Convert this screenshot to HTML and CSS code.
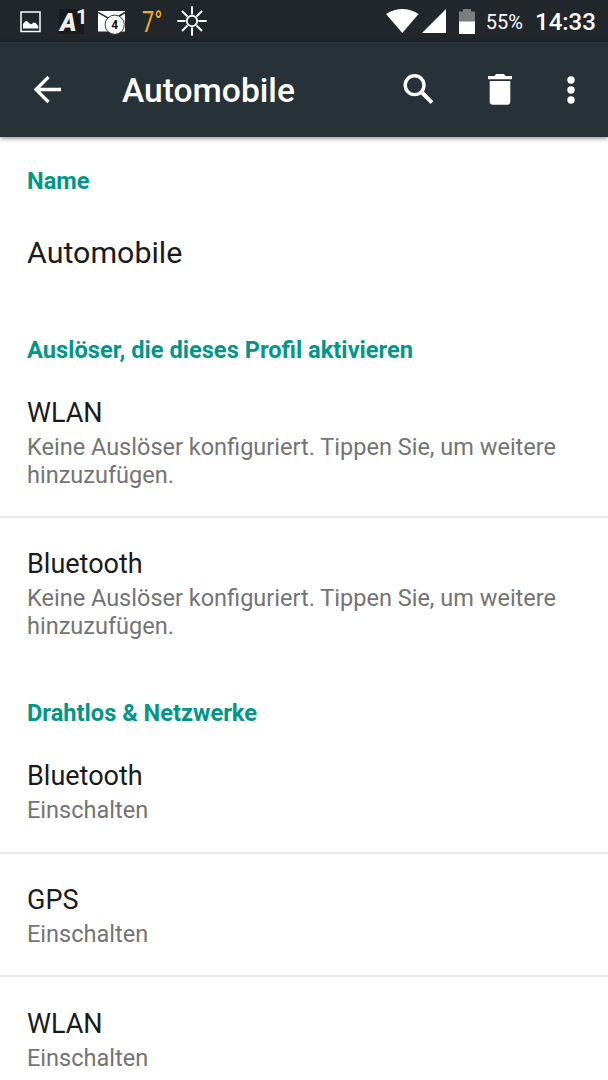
FILE: index.html
```html
<!DOCTYPE html>
<html lang="de">
<head>
    <meta charset="UTF-8">
    <meta name="viewport" content="width=device-width, initial-scale=1.0">
    <title>Automobile</title>
    <link rel="stylesheet" href="styles.css">
</head>
<body>
    <div class="status-bar">
        <div class="notifications">
            <svg class="icon-picture" width="22" height="22" viewBox="0 0 22 22">
                <rect x="1" y="1" width="19" height="19.5" fill="none" stroke="#fff" stroke-width="1.5"/>
                <path d="M3 17.5V13L5 10.5L7 10L9.5 12.5L11.5 13.3L13.5 11.5L15.5 12L18.3 15V17.5Z" fill="#fff"/>
            </svg>
            <span class="icon-a1"><b>A</b><i>1</i></span>
            <svg class="icon-mail" width="28" height="25" viewBox="0 0 28 25">
                <rect width="27" height="20.5" fill="#fff"/>
                <path d="M0 1.5L10 6.8M27 1.5L20.5 5.5" fill="none" stroke="#21272b" stroke-width="1.5"/>
                <circle cx="16.7" cy="13.7" r="9.6" fill="#fff" stroke="#21272b" stroke-width="0.9"/>
                <text x="16.7" y="18" text-anchor="middle">4</text>
            </svg>
            <span class="temperature">7°</span>
            <svg class="icon-sun" width="30" height="30" viewBox="0 0 30 30" fill="none" stroke="#fff" stroke-width="1.9">
                <circle cx="15" cy="15" r="5.2"/>
                <path d="M15 .3V8.5M15 21.5V29.7M.3 15H8.5M21.5 15H29.7M5 5L10.5 10.5M19.5 19.5L25 25M25 5L19.5 10.5M10.5 19.5L5 25"/>
            </svg>
        </div>
        <div class="system">
            <svg class="icon-wifi" width="33" height="24" viewBox="0 0 33 24">
                <path d="M0 5Q16.3-5 32.6 5L16.3 24Z" fill="#fff"/>
            </svg>
            <svg class="icon-signal" width="24" height="24" viewBox="0 0 24 24">
                <path d="M0 24L24 0V24Z" fill="#fff"/>
            </svg>
            <svg class="icon-battery" width="16" height="25" viewBox="0 0 16 25">
                <path d="M0 2.5H4V0H12V2.5H16V13H0Z" fill="#7b7d7f"/>
                <path d="M0 12.5H16V25H0Z" fill="#fff"/>
            </svg>
            <span class="percent">55%</span>
            <span class="clock">14:33</span>
        </div>
    </div>

    <header>
        <svg class="back" width="28" height="28" viewBox="0 0 28 28" fill="none" stroke="#fff" stroke-width="3.3">
            <path d="M28 13.5H3.5M15.5 1L3 13.5L15.5 26"/>
        </svg>
        <h1>Automobile</h1>
        <svg class="search" width="31" height="31" viewBox="0 0 31 31" fill="none" stroke="#fff">
            <circle cx="11.6" cy="11.2" r="9.4" stroke-width="3.4"/>
            <path d="M18.9 18.5L29 28.6" stroke-width="4"/>
        </svg>
        <svg class="trash" width="24" height="31" viewBox="0 0 24 31" fill="#fff">
            <path d="M0 2H6.5L8 0H16L17.5 2H24V5.2H0Z"/>
            <path d="M1.7 7H22.3V27.5Q22.3 30.8 19 30.8H5Q1.7 30.8 1.7 27.5Z"/>
        </svg>
        <svg class="more" width="8" height="28" viewBox="0 0 8 28" fill="#fff">
            <circle cx="4" cy="4" r="3.7"/>
            <circle cx="4" cy="14" r="3.7"/>
            <circle cx="4" cy="24" r="3.7"/>
        </svg>
    </header>

    <main>
        <section>
            <h2>Name</h2>
            <p class="profile-name">Automobile</p>
        </section>

        <section>
            <h2>Auslöser, die dieses Profil aktivieren</h2>
            <div class="item">
                <h3>WLAN</h3>
                <p>Keine Auslöser konfiguriert. Tippen Sie, um weitere hinzuzufügen.</p>
            </div>
            <div class="item">
                <h3>Bluetooth</h3>
                <p>Keine Auslöser konfiguriert. Tippen Sie, um weitere hinzuzufügen.</p>
            </div>
        </section>

        <section>
            <h2>Drahtlos &amp; Netzwerke</h2>
            <div class="item">
                <h3>Bluetooth</h3>
                <p>Einschalten</p>
            </div>
            <div class="item">
                <h3>GPS</h3>
                <p>Einschalten</p>
            </div>
            <div class="item">
                <h3>WLAN</h3>
                <p>Einschalten</p>
            </div>
        </section>
    </main>
</body>
</html>
```
FILE: styles.css
```css
* {
    box-sizing: border-box;
}
body {
    font-family: Roboto, sans-serif;
    margin: 0;
    height: 1080px;
    overflow: hidden;
    background-color: #fff;
    color: #1b1b1b;
}
h1, h2, h3, p {
    margin: 0;
}
svg {
    display: block;
    flex: none;
}
.status-bar {
    display: flex;
    justify-content: space-between;
    height: 42px;
    padding: 0 14px 0 20px;
    background-color: #21272b;
    color: #fff;
}
.notifications, .system {
    display: flex;
    align-items: center;
}
.icon-picture {
    margin-top: 1px;
}
.icon-a1 {
    display: flex;
    width: 25px;
    height: 25px;
    margin-left: 17px;
    padding-left: 1px;
    background-color: #1a1a1a;
    color: #eee;
    line-height: 27px;
}
.icon-a1 b {
    font-size: 25px;
    font-weight: 900;
    font-style: italic;
    width: 16px;
}
.icon-a1 i {
    font-size: 20px;
    font-weight: 700;
    font-style: normal;
    line-height: 17px;
}
.icon-mail {
    margin: 5px 0 0 14px;
}
.icon-mail text {
    font-size: 12px;
    font-weight: 700;
    fill: #111;
}
.temperature {
    width: 20px;
    margin: 1px 0 0 16px;
    color: #f8ae2c;
    font-size: 29px;
    letter-spacing: 0;
    transform: scaleX(0.75);
    transform-origin: left;
}
.icon-sun {
    margin-left: 15px;
}
.icon-signal {
    margin-left: 3px;
}
.icon-battery {
    margin-left: 13px;
}
.percent {
    margin: 2px 0 0 11px;
    font-size: 20px;
}
.clock {
    margin: 2px 0 0 12px;
    font-size: 24px;
    font-weight: 500;
    width: 59px;
}
header {
    display: flex;
    align-items: center;
    height: 95px;
    padding: 0 33px;
    background-color: #273238;
    color: #fff;
    box-shadow: 0 1px 5px rgba(0, 0, 0, 0.5);
}
h1 {
    flex: 1;
    margin: 3px 0 0 61px;
    font-size: 33.6px;
    font-weight: 500;
    line-height: 40px;
}
.trash {
    margin-left: 54px;
}
.more {
    margin-left: 55px;
}
main {
    padding-top: 30px;
}
h2 {
    padding: 0 27px;
    color: #009788;
    font-size: 23.65px;
    font-weight: 700;
    line-height: 28px;
}
section + section {
    padding-top: 32px;
}
.profile-name {
    padding: 40px 27px 34px;
    font-size: 30.4px;
    line-height: 35px;
}
.item {
    padding: 28px 27px 26.8px;
}
h2 + .item {
    margin-top: 4px;
}
.item + .item {
    padding-top: 29.3px;
    border-top: 2px solid #e8e8e8;
}
.item h3 {
    font-size: 27px;
    font-weight: 400;
    line-height: 34px;
}
.item p {
    margin-top: 4px;
    color: #747474;
    font-size: 23.52px;
    line-height: 27.6px;
}
```
